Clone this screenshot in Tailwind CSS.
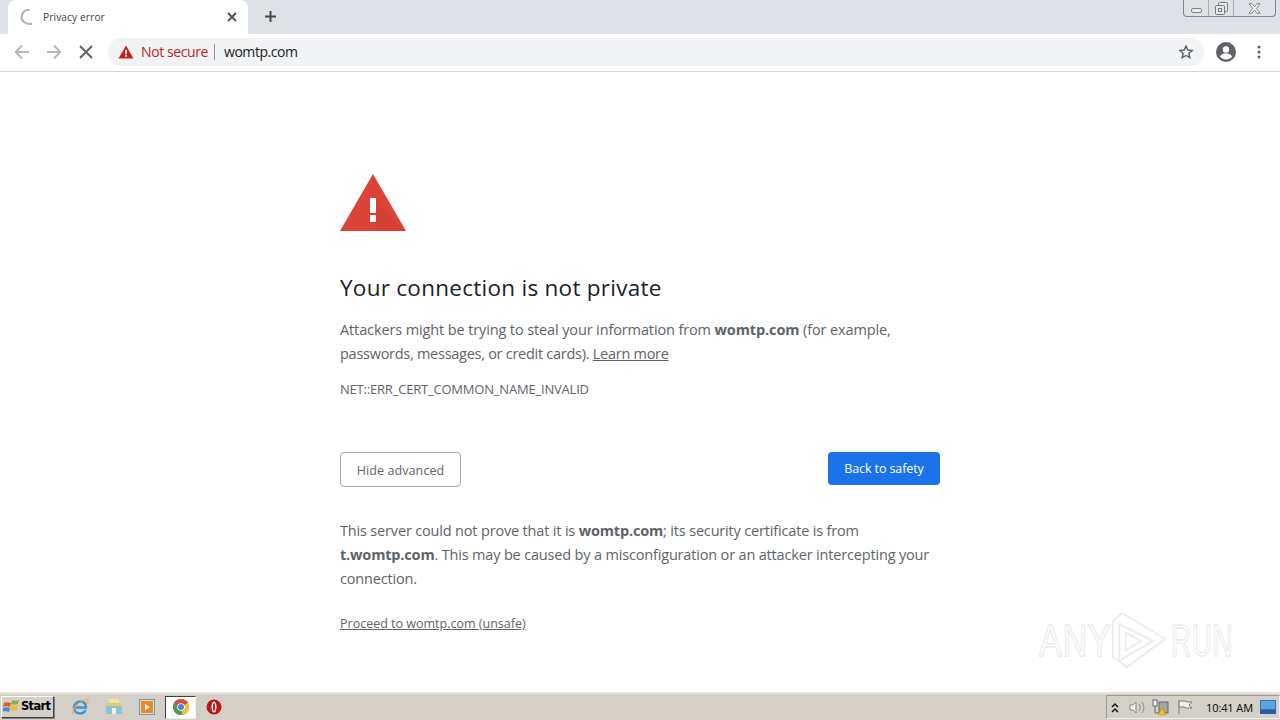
<!DOCTYPE html>
<html>
<head>
<meta charset="utf-8">
<script src="https://cdn.jsdelivr.net/npm/@tailwindcss/browser@4"></script>
</head>
<body class="w-[1280px] h-[720px] overflow-hidden bg-white font-['Open_Sans',sans-serif]">
<div class="relative flex flex-col h-[720px]">
  <!-- tab strip -->
  <div class="relative flex items-end h-[34px] bg-[#dee1e6] shrink-0">
    <div class="flex items-center ml-[8px] w-[240px] h-[34px] bg-white rounded-t-[8px] pl-[12px] pr-[11px]">
      <svg class="w-[14px] h-[16px] shrink-0" viewBox="0 0 14 16" fill="none"><path d="M9.500 1A7 7 0 0 0 1.500 8c0 4 3.500 7.500 10.500 6.800" stroke="#b4b6b9" stroke-width="2.200" fill="none"/></svg>
      <span class="ml-[9px] text-[10.2px] text-[#3c4043] tracking-[0.1px] leading-none font-['Open_Sans',sans-serif]">Privacy error</span>
      <svg class="ml-auto w-[10px] h-[10px] shrink-0" viewBox="0 0 10 10"><path d="M1 1l8 8M9 1l-8 8" stroke="#4a4d50" stroke-width="1.800"/></svg>
    </div>
    <svg class="ml-[16px] mb-[11px] w-[13px] h-[13px]" viewBox="0 0 13 13"><path d="M6.500 1v11M1 6.500h11" stroke="#45484b" stroke-width="2"/></svg>
    <!-- window controls -->
    <div class="absolute right-[4px] top-0 flex h-[17px] w-[93px] border border-t-0 border-[#80858c] rounded-b-[4px] text-[#6c7075]">
      <div class="flex items-end justify-center w-[25px] border-r border-[#a9adb3] pb-[3px]"><div class="w-[11px] h-[5px] border border-[#7d8186] rounded-[2px] bg-[#eceef1]"></div></div>
      <div class="flex items-center justify-center w-[25px] border-r border-[#a9adb3]">
        <svg class="w-[13px] h-[13px]" viewBox="0 0 13 13" fill="none" stroke="#777b80"><rect x="3.500" y="0.500" width="9" height="9" rx="1" fill="#e4e6ea"/><rect x="0.500" y="3.500" width="9" height="9" rx="1" fill="#e4e6ea"/><rect x="3.500" y="6.500" width="3" height="3"/></svg>
      </div>
      <div class="flex items-center justify-center flex-1">
        <svg class="w-[13px] h-[11px]" viewBox="0 0 13 11" fill="#eef0f2" stroke="#83878c"><path d="M1 .7h3l2.500 3 2.500-3h3L8.500 5.500l3.500 4.800H9L6.500 7 4 10.300H1L4.500 5.500z"/></svg>
      </div>
    </div>
  </div>
  <!-- toolbar -->
  <div class="flex items-center h-[38px] pb-[1px] bg-white border-b border-[#d3d4d6] shrink-0">
    <svg class="ml-[14px] w-[16px] h-[16px] shrink-0" viewBox="0 0 16 16" fill="none" stroke="#b6b8bb" stroke-width="2"><path d="M15 8H2M8 1.500L1.800 8 8 14.500"/></svg>
    <svg class="ml-[16px] w-[16px] h-[16px] shrink-0" viewBox="0 0 16 16" fill="none" stroke="#b6b8bb" stroke-width="2"><path d="M1 8h13M8 1.500L14.200 8 8 14.500"/></svg>
    <svg class="ml-[17px] w-[14px] h-[14px] shrink-0" viewBox="0 0 14 14" fill="none" stroke="#5f6368" stroke-width="2"><path d="M1 1l12 12M13 1L1 13"/></svg>
    <div class="flex items-center ml-[15px] w-[1096px] h-[28px] bg-[#f1f3f4] rounded-full pl-[10px] pr-[10px]">
      <svg class="w-[16px] h-[14px] shrink-0" viewBox="0 0 16 14"><path d="M8 .5L15.500 13.500H.5z" fill="#c5221f"/><rect x="7.200" y="4.800" width="1.700" height="4.500" fill="#fff"/><rect x="7.200" y="10" width="1.700" height="1.700" fill="#fff"/></svg>
      <span class="ml-[7px] mb-[1px] text-[14px] text-[#c5221f] tracking-[-0.4px] whitespace-nowrap">Not secure</span>
      <div class="ml-[6px] w-px h-[16px] bg-[#8e9195]"></div>
      <span class="ml-[9px] mb-[1px] text-[14px] text-[#202124] tracking-[-0.45px]">womtp.com</span>
      <svg class="ml-auto w-[16px] h-[16px]" viewBox="0 0 24 24" fill="none" stroke="#5f6368" stroke-width="2.200"><path d="M12 3.200l2.700 5.900 6.400.7-4.800 4.300 1.400 6.300L12 17.200l-5.700 3.200 1.400-6.300-4.800-4.300 6.400-.7z"/></svg>
    </div>
    <svg class="ml-[12px] w-[20px] h-[20px] shrink-0" viewBox="0 0 20 20"><circle cx="10" cy="10" r="10" fill="#5f6368"/><circle cx="10" cy="7.500" r="3.200" fill="#fff"/><path d="M3.800 14.500c1.500-2.400 4-3.200 6.200-3.200s4.700.8 6.200 3.200C14.800 16.500 12.500 17.500 10 17.500s-4.800-1-6.200-3z" fill="#fff"/></svg>
    <svg class="ml-[21px] w-[4px] h-[14px] shrink-0" viewBox="0 0 4 14" fill="#5f6368"><circle cx="2" cy="2" r="1.500"/><circle cx="2" cy="7" r="1.500"/><circle cx="2" cy="12" r="1.500"/></svg>
  </div>
  <!-- page -->
  <main class="relative flex-1 bg-white">
    <div class="w-[600px] ml-[340px] pt-[102px]">
      <svg class="block w-[66px] h-[57px]" viewBox="0 0 66 57"><path d="M33 0L66 57H0z" fill="#dc4337"/><path d="M36 24l30 33H36z" fill="#c9382d" opacity="0.25"/><rect x="30" y="24" width="6" height="15" fill="#fff"/><rect x="30" y="41" width="6" height="7" fill="#fff"/></svg>
      <h1 class="mt-[41px] text-[22.500px] leading-[32px] text-[#202124] tracking-[0.27px] whitespace-nowrap">Your connection is not private</h1>
      <p class="mt-[14px] text-[14.500px] leading-[24px] text-[#5f6368] tracking-[-0.12px] whitespace-nowrap">Attackers might be trying to steal your information from <b class="font-bold">womtp.com</b> (for example,<br><span class="tracking-[-0.27px]">passwords, messages, or credit cards). <a class="underline text-[#5f6368]">Learn more</a></span></p>
      <p class="mt-[15px] text-[13px] leading-[16px] text-[#5f6368] tracking-[-0.2px]">NET::ERR_CERT_COMMON_NAME_INVALID</p>
      <div class="flex justify-between items-start mt-[55px]">
        <button class="flex items-center justify-center w-[121px] h-[35px] pt-[3px] border border-[#a5a7aa] rounded-[4px] bg-white text-[12.500px] text-[#5f6368] tracking-[0.1px]">Hide advanced</button>
        <button class="flex items-center justify-center w-[112px] h-[33px] pt-[1px] rounded-[4px] bg-[#1a73e8] text-[12.500px] text-white tracking-[-0.1px]">Back to safety</button>
      </div>
      <p class="mt-[32px] text-[14.500px] leading-[24px] text-[#5f6368] tracking-[-0.17px] whitespace-nowrap">This server could not prove that it is <b class="font-bold">womtp.com</b>; its security certificate is from<br><b class="font-bold">t.womtp.com</b>. This may be caused by a misconfiguration or an attacker intercepting your<br>connection.</p>
      <p class="mt-[25px] text-[12.500px] leading-[16px] text-[#5f6368] underline tracking-[0px]">Proceed to womtp.com (unsafe)</p>
    </div>
    <!-- watermark -->
    <div class="absolute left-[1039px] top-[536px] flex items-center h-[64px] select-none">
      <span class="text-[45px] leading-none font-['Liberation_Sans',sans-serif] text-white [-webkit-text-stroke:1.500px_#ececec] tracking-[1px] scale-x-[0.76] origin-left w-[70px] whitespace-nowrap">ANY</span>
      <svg class="w-[58px] h-[68px] ml-[0px]" viewBox="0 0 62 64" fill="none" stroke="#ececec" stroke-width="2"><path d="M4 12L14 3l46 28-41 30L4 50z"/><path d="M11 15l36 18-36 21z"/><path d="M18 24l16 9-16 10z"/></svg>
      <span class="ml-[4px] text-[45px] leading-none font-['Liberation_Sans',sans-serif] text-white [-webkit-text-stroke:1.500px_#ececec] tracking-[1px] scale-x-[0.62] origin-left whitespace-nowrap">RUN</span>
    </div>
  </main>
  <!-- taskbar -->
  <div class="flex items-center h-[28px] bg-[#d4d0c8] border-t-2 border-t-[#e6e3dd] shrink-0 relative">
    <button class="flex items-center ml-[1px] w-[53px] h-[22px] border border-t-white border-l-white border-r-[#404040] border-b-[#404040] shadow-[1px_1px_0_#808080] bg-[#d4d0c8]">
      <svg class="ml-[1px] w-[17px] h-[16px] shrink-0" viewBox="0 0 17 16"><path d="M1 4c2-1 4-1 7 0L7 8C4 7 3 7 0 8z" fill="#e2592a"/><path d="M9 1c2 1 4 1 7 0l-1 4c-3 1-5 1-7 0z" fill="#7ab648"/><path d="M0 9c3-1 4-1 7 0l-1 4c-3-1-4-1-7 0z" fill="#3d8fd1"/><path d="M8 6c3 1 4 1 7 0l-1 5c-3 1-5 1-7 0z" fill="#f0bb2c"/></svg>
      <span class="ml-[1px] text-[11.500px] font-bold text-black font-['DejaVu_Sans',sans-serif] tracking-[-0.7px] leading-none">Start</span>
    </button>
    <svg class="ml-[17px] w-[18px] h-[18px] shrink-0" viewBox="0 0 18 18" fill="none"><path d="M4 9.500h11c.2-4-2.500-6-5.500-6S3 6 3 9.500 5.500 15.500 9 15.500c2.500 0 4.500-1 5.500-3.500" stroke="#3f93d8" stroke-width="2.500"/><path d="M2 16C0 13 6 4 16 1c1.500 1 1 3.500 0 5" stroke="#e3b23c" stroke-width="1.200"/></svg>
    <svg class="ml-[16px] w-[18px] h-[18px] shrink-0" viewBox="0 0 18 18"><path d="M4 1h10v4H4z" fill="#f0e4a8"/><path d="M1 5h16v11H1z" fill="#8cc1d8"/><path d="M1 5h16v3H1z" fill="#e4c777"/><rect x="7" y="10" width="4" height="6" fill="#f4f0d8"/></svg>
    <svg class="ml-[16px] w-[16px] h-[16px] shrink-0" viewBox="0 0 16 16"><rect x="0.500" y="0.500" width="15" height="15" fill="#cfdde8" stroke="#6f97bd"/><rect x="2" y="2" width="12" height="12" fill="#ee8a1e"/><path d="M6 5l5 3-5 3z" fill="#fff"/></svg>
    <div class="flex items-center justify-center ml-[10px] w-[31px] h-[23px] bg-white border border-t-[#404040] border-l-[#404040] border-r-[#f2f0ec] border-b-[#f2f0ec]">
      <svg class="w-[16px] h-[16px]" viewBox="0 0 16 16"><circle cx="8" cy="8" r="8" fill="#dd4b3e"/><path d="M8 8l6.900-4A8 8 0 0 1 9 16z" fill="#f1c232"/><path d="M8 8L9 16A8 8 0 0 1 1.100 4z" fill="#4a9e52"/><path d="M1.100 4A8 8 0 0 1 14.900 4H8z" fill="#dd4b3e"/><circle cx="8" cy="8" r="3.800" fill="#fff"/><circle cx="8" cy="8" r="3" fill="#4a84d8"/></svg>
    </div>
    <svg class="ml-[10px] w-[16px] h-[16px] shrink-0" viewBox="0 0 16 16"><circle cx="8" cy="8" r="7.500" fill="#bf1515"/><ellipse cx="8" cy="8" rx="2.500" ry="5.500" fill="#fff"/><ellipse cx="8" cy="8" rx="1" ry="4" fill="#bf1515"/></svg>
    <!-- tray -->
    <div class="ml-auto flex items-center w-[174px] h-[24px] border border-[#a09c94] border-r-[#f2f0ec] border-b-[#f2f0ec]">
      <svg class="ml-[4px] w-[8px] h-[11px] shrink-0" viewBox="0 0 8 11" fill="none" stroke="#111" stroke-width="1.500"><path d="M1 5l3-3 3 3M1 10l3-3 3 3"/></svg>
      <svg class="ml-[10px] w-[17px] h-[15px] shrink-0" viewBox="0 0 17 15" fill="none" stroke="#8a8a8a"><path d="M1 5h3l3-3v11l-3-3H1z" fill="#f2f2f2"/><path d="M10 4c1.500 2 1.500 5 0 7M13 2c2.500 3 2.500 8 0 11"/></svg>
      <svg class="ml-[6px] w-[17px] h-[17px] shrink-0" viewBox="0 0 17 17"><rect x="1" y="1" width="4" height="6" fill="#f2f2f2" stroke="#666"/><rect x="7" y="3" width="9" height="11" fill="#a8a49c" stroke="#666"/><path d="M3 7v7h4" fill="none" stroke="#666"/><path d="M10 9l4 7H6z" fill="#f2c51e" stroke="#b58a00" stroke-width=".5"/></svg>
      <svg class="ml-[8px] w-[16px] h-[16px] shrink-0" viewBox="0 0 16 16" fill="#efefef" stroke="#7a7a7a"><path d="M2 1v14"/><path d="M2 2h6l2 1h5l-3 3 3 3H9L7 8H2z"/></svg>
      <span class="ml-[13px] text-[11px] text-black font-['Open_Sans',sans-serif] tracking-[-0.1px] whitespace-nowrap leading-none">10:41 AM</span>
      <svg class="ml-[7px] w-[16px] h-[14px] shrink-0" viewBox="0 0 16 14"><rect width="16" height="14" fill="#2f76b9"/><rect x="1" y="1" width="14" height="8" fill="#5aa3dd"/><rect x="0" y="10" width="16" height="4" fill="#2c5d9c"/></svg>
    </div>
  </div>
</div>
</body>
</html>
